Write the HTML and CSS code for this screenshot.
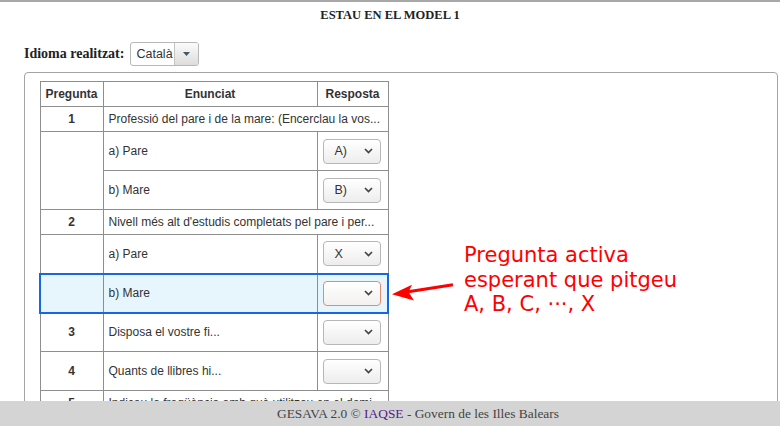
FILE: index.html
```html
<!DOCTYPE html>
<html lang="ca">
<head>
<meta charset="utf-8">
<title>ESTAU EN EL MODEL 1</title>
<link rel="stylesheet" href="styles.css">
</head>
<body>
<div class="topline"></div>
<h1 class="title">ESTAU EN EL MODEL 1</h1>
<div class="lang-row">
  <span class="lang-label">Idioma realitzat:</span>
  <div class="lang-select">
    <span class="lang-value">Català</span>
    <span class="lang-btn"><svg width="7" height="4" viewBox="0 0 7 4"><path d="M0 0H7L3.5 4Z" fill="#3f5868"/></svg></span>
  </div>
</div>
<div class="panel">
  <table class="qtable">
    <colgroup><col class="c1"><col class="c2"><col class="c3"></colgroup>
    <thead>
      <tr><th>Pregunta</th><th>Enunciat</th><th>Resposta</th></tr>
    </thead>
    <tbody>
      <tr class="q"><td class="num">1</td><td colspan="2">Professió del pare i de la mare: (Encerclau la vos...</td></tr>
      <tr class="sub"><td rowspan="2"></td><td>a) Pare</td><td class="ans"><div class="sel"><span>A)</span><svg class="chev" width="9" height="6" viewBox="0 0 9 6"><path d="M1 1L4.5 4.5L8 1" fill="none" stroke="#444" stroke-width="1.7"/></svg></div></td></tr>
      <tr class="sub"><td>b) Mare</td><td class="ans"><div class="sel"><span>B)</span><svg class="chev" width="9" height="6" viewBox="0 0 9 6"><path d="M1 1L4.5 4.5L8 1" fill="none" stroke="#444" stroke-width="1.7"/></svg></div></td></tr>
      <tr class="q"><td class="num">2</td><td colspan="2">Nivell més alt d'estudis completats pel pare i per...</td></tr>
      <tr class="sub"><td></td><td>a) Pare</td><td class="ans"><div class="sel"><span>X</span><svg class="chev" width="9" height="6" viewBox="0 0 9 6"><path d="M1 1L4.5 4.5L8 1" fill="none" stroke="#444" stroke-width="1.7"/></svg></div></td></tr>
      <tr class="sub active"><td></td><td>b) Mare</td><td class="ans"><div class="sel focus"><span></span><svg class="chev" width="9" height="6" viewBox="0 0 9 6"><path d="M1 1L4.5 4.5L8 1" fill="none" stroke="#444" stroke-width="1.7"/></svg></div></td></tr>
      <tr class="sub"><td class="num">3</td><td>Disposa el vostre fi...</td><td class="ans"><div class="sel"><span></span><svg class="chev" width="9" height="6" viewBox="0 0 9 6"><path d="M1 1L4.5 4.5L8 1" fill="none" stroke="#444" stroke-width="1.7"/></svg></div></td></tr>
      <tr class="sub"><td class="num">4</td><td>Quants de llibres hi...</td><td class="ans"><div class="sel"><span></span><svg class="chev" width="9" height="6" viewBox="0 0 9 6"><path d="M1 1L4.5 4.5L8 1" fill="none" stroke="#444" stroke-width="1.7"/></svg></div></td></tr>
      <tr class="q"><td class="num">5</td><td colspan="2">Indicau la freqüència amb què utilitzau en el domi...</td></tr>
    </tbody>
  </table>
</div>

<div class="note">Pregunta activa<br>esperant que pitgeu<br>A, B, C, ···, X</div>
<svg class="note-arrow" width="70" height="24" viewBox="388 282 70 24">
  <line x1="453" y1="284.8" x2="408" y2="291.8" stroke="#ff0000" stroke-width="3"/>
  <path d="M392 294.3L412 284.8L408.5 292L414 300.6Z" fill="#ff0000"/>
</svg>

<div class="footer">GESAVA 2.0 © <a class="footer-link" href="#">IAQSE</a> - Govern de les Illes Balears</div>
</body>
</html>
```

FILE: styles.css
```css
html, body {
  margin: 0;
  padding: 0;
  background: #fff;
}
body {
  font-family: "Liberation Serif", "Times New Roman", serif;
  color: #222;
  width: 780px;
  height: 426px;
  overflow: hidden;
}
.topline {
  height: 2px;
  background: #a8a8a8;
}
.title {
  margin: 0;
  padding-top: 4px;
  font-size: 12.5px;
  line-height: 18px;
  font-weight: bold;
  text-align: center;
  color: #222;
}
.lang-row {
  display: flex;
  align-items: center;
  margin: 18px 0 0 24px;
  height: 24px;
}
.lang-label {
  font-size: 14px;
  font-weight: bold;
  color: #222;
  margin-right: 6px;
}
.lang-select {
  display: flex;
  height: 24px;
  width: 69px;
  box-sizing: border-box;
  border: 1px solid #b8b8b8;
  border-radius: 3px;
  background: #fff;
  font-family: "Liberation Sans", Arial, sans-serif;
  font-size: 12.5px;
  color: #333;
  overflow: hidden;
}
.lang-value {
  display: flex;
  align-items: center;
  padding: 0 0 0 5px;
  flex: 1;
}
.lang-btn {
  width: 23px;
  display: flex;
  align-items: center;
  justify-content: center;
  border-left: 1px solid #c4c4c4;
  background: linear-gradient(#fbfbfb, #dcdcdc);
}
.panel {
  margin: 6px 2px 0 24px;
  border: 1px solid #a4a4a4;
  border-radius: 4px;
  padding: 8px 14px;
  height: 340px;
}
.qtable {
  border-collapse: collapse;
  table-layout: fixed;
  width: 348px;
  font-family: "Liberation Sans", Arial, sans-serif;
  font-size: 12px;
  color: #333;
}
.c1 { width: 63px; }
.c2 { width: 214px; }
.c3 { width: 71px; }
.qtable th,
.qtable td {
  border: 1px solid #8e8e8e;
  padding: 5px 5px;
  line-height: 14px;
  white-space: nowrap;
  overflow: hidden;
}
.qtable th {
  font-weight: bold;
  text-align: center;
  color: #333;
}
.qtable td.num {
  text-align: center;
  font-weight: bold;
}
.qtable .sub td {
  height: 39px;
  padding-top: 0;
  padding-bottom: 0;
  box-sizing: border-box;
}
.qtable td.ans {
  padding-left: 5px;
  padding-right: 6px;
}
.qtable .active td {
  background: #e7f6fd;
  border-top: 2px solid #1766e2;
  border-bottom: 2px solid #1766e2;
}
.qtable .active td:first-child {
  border-left: 2px solid #1766e2;
}
.qtable .active td:last-child {
  border-right: 2px solid #1766e2;
}
.sel {
  display: flex;
  align-items: center;
  justify-content: space-between;
  width: 58px;
  height: 25px;
  box-sizing: border-box;
  border: 1px solid #b7b7b7;
  border-radius: 4px;
  background: linear-gradient(#ffffff, #ededed);
  padding: 0 7px 0 11px;
  font-size: 12.5px;
  color: #333;
}
.qtable .sel.focus {
  border-color: #e08d74;
  background: linear-gradient(#ffffff, #f3f1f0);
}
.chev {
  display: block;
}
.note {
  position: absolute;
  left: 464px;
  top: 243px;
  font-family: "DejaVu Sans", sans-serif;
  font-size: 21px;
  line-height: 24.5px;
  color: #ff0000;
}
.note-arrow {
  position: absolute;
  left: 388px;
  top: 282px;
}
.footer {
  position: fixed;
  left: 0;
  right: 0;
  bottom: 0;
  height: 25px;
  line-height: 25px;
  padding-left: 56px;
  background: #d4d4d4;
  text-align: center;
  font-family: "Liberation Serif", "Times New Roman", serif;
  font-size: 13.4px;
  color: #444;
}
.footer-link {
  color: #551a8b;
  text-decoration: none;
}
```
